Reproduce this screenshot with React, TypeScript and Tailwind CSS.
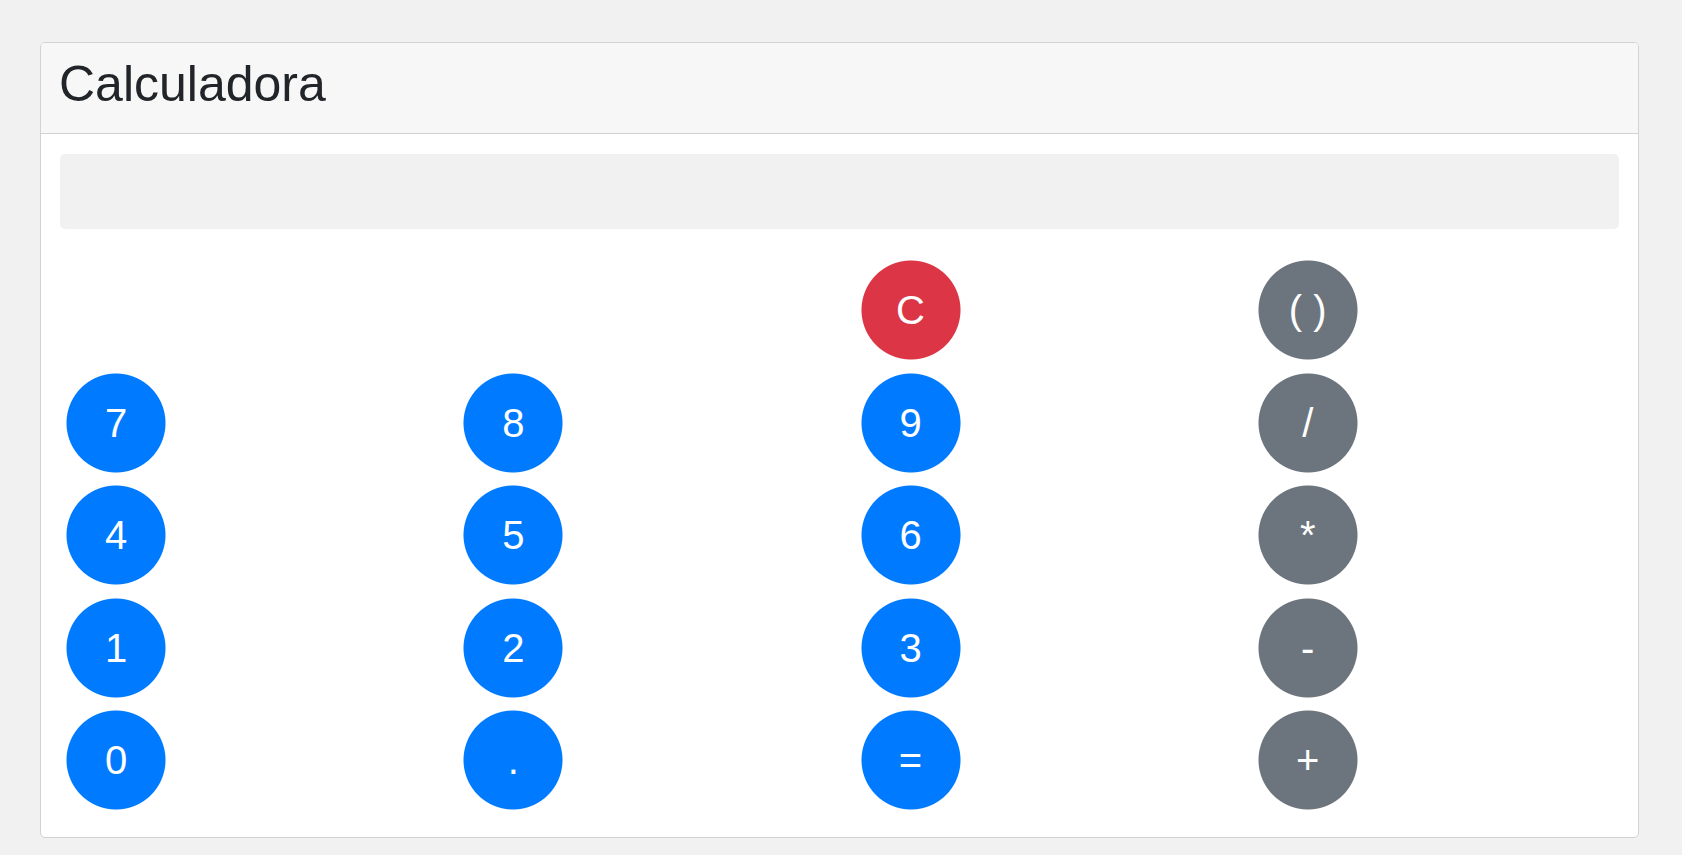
import React from "react"

type Key = { label: string; tone: "blue" | "red" | "gray" } | null

const rows: Key[][] = [
  [null, null, { label: "C", tone: "red" }, { label: "( )", tone: "gray" }],
  [{ label: "7", tone: "blue" }, { label: "8", tone: "blue" }, { label: "9", tone: "blue" }, { label: "/", tone: "gray" }],
  [{ label: "4", tone: "blue" }, { label: "5", tone: "blue" }, { label: "6", tone: "blue" }, { label: "*", tone: "gray" }],
  [{ label: "1", tone: "blue" }, { label: "2", tone: "blue" }, { label: "3", tone: "blue" }, { label: "-", tone: "gray" }],
  [{ label: "0", tone: "blue" }, { label: ".", tone: "blue" }, { label: "=", tone: "blue" }, { label: "+", tone: "gray" }],
]

// radial gradients give a smoother edge than border-radius in this renderer
const toneClass = {
  blue: "bg-[radial-gradient(circle_closest-side,#007bff_calc(100%-1px),transparent_100%)]",
  red: "bg-[radial-gradient(circle_closest-side,#dc3545_calc(100%-1px),transparent_100%)]",
  gray: "bg-[radial-gradient(circle_closest-side,#6c757d_calc(100%-1px),transparent_100%)]",
}

function CalcButton({ k }: { k: Key }) {
  if (!k) return <div className="mx-[6px] my-[6.25px] h-[100px] w-[100px]" />
  return (
    <button
      className={`${toneClass[k.tone]} mx-[6px] my-[6.25px] flex h-[100px] w-[100px] items-center justify-center text-[40px] leading-none text-white`}
    >
      {k.label}
    </button>
  )
}

export default function App() {
  return (
    <div className="min-h-[855px] bg-[#f1f1f1] pt-[42px] pl-[40px] font-['Liberation_Sans',Arial,sans-serif] text-[#212529]">
      <div className="w-[1599px] overflow-hidden rounded-[5px] border border-[#d2d2d2] bg-white">
        <div className="border-b border-[#d2d2d2] bg-[#f7f7f7] px-[18px] pt-[11px] pb-[19px]">
          <h1 className="text-[50px] leading-[60px] font-normal">Calculadora</h1>
        </div>
        <div className="px-[19px] pt-[20px] pb-[20px]">
          <div className="mb-[25px] h-[75px] rounded-[5px] bg-[#f1f1f1]" />
          <div className="mx-[-15px] flex flex-col">
            {rows.map((row, i) => (
              <div key={i} className="grid grid-cols-4">
                {row.map((k, j) => (
                  <div key={j} className="px-[15px]">
                    <CalcButton k={k} />
                  </div>
                ))}
              </div>
            ))}
          </div>
        </div>
      </div>
    </div>
  )
}
